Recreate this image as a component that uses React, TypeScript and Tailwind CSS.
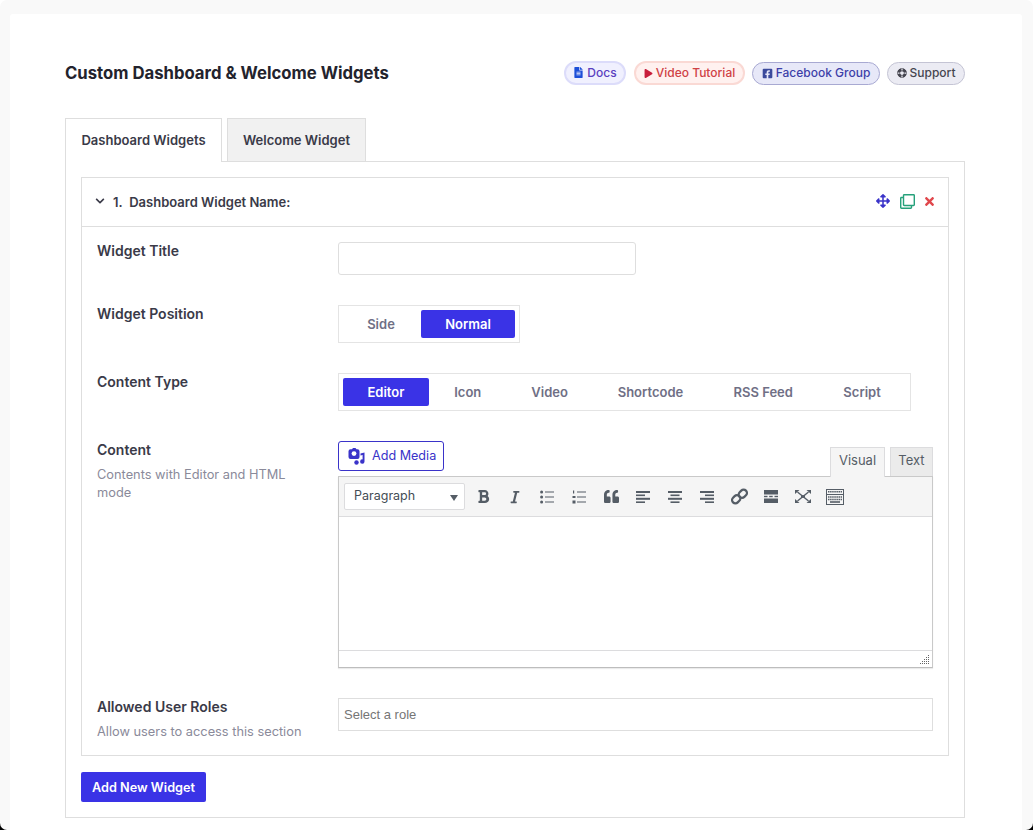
import { FaFileAlt, FaPlay, FaFacebookSquare, FaLifeRing, FaArrowsAlt, FaRegClone, FaTimes, FaChevronDown, FaBold, FaItalic, FaQuoteLeft } from 'react-icons/fa'

const FONT = "font-['Inter','Noto_Sans',sans-serif]"
const GREY = '#555d66'

function Label({ title, hint }: { title: string; hint?: string }) {
  return (
    <div className="w-[241px] shrink-0">
      <div className="text-[14px] leading-[18px] font-semibold text-[#3a3a48]">{title}</div>
      {hint && <div className="mt-[7px] text-[12.8px] leading-[18px] text-[#8a8a9a] w-[220px]">{hint}</div>}
    </div>
  )
}

function ListIcon({ numbered }: { numbered?: boolean }) {
  return (
    <svg width="14" height="14" viewBox="0 0 14 14" fill={GREY}>
      <rect x="5" y="1.5" width="9" height="1" />
      <rect x="5" y="6.5" width="9" height="1" />
      <rect x="5" y="11.5" width="9" height="1" />
      {numbered ? (
        <>
          <rect x="1" y="0.5" width="1.2" height="3" />
          <rect x="0.5" y="6" width="3" height="2" />
          <rect x="0.5" y="10.5" width="3" height="3" />
        </>
      ) : (
        <>
          <circle cx="1.6" cy="2" r="1.5" />
          <circle cx="1.6" cy="7" r="1.5" />
          <circle cx="1.6" cy="12" r="1.5" />
        </>
      )}
    </svg>
  )
}

function AlignIcon({ side }: { side: 'left' | 'center' | 'right' }) {
  const short = side === 'left' ? 0 : side === 'center' ? 2.5 : 5
  return (
    <svg width="14" height="14" viewBox="0 0 14 14" fill={GREY}>
      <rect x="0" y="1" width="14" height="2" />
      <rect x={short} y="4.5" width="9" height="1.6" />
      <rect x="0" y="7.8" width="14" height="2" />
      <rect x={short} y="11.4" width="9" height="1.6" />
    </svg>
  )
}

function LinkIcon() {
  return (
    <svg width="17" height="17" viewBox="0 0 18 18" fill="none" stroke={GREY} strokeWidth="2.4">
      <rect x="9" y="1.4" width="7" height="9.4" rx="3.5" transform="rotate(45 12.5 6.1)" />
      <rect x="2" y="7.2" width="7" height="9.4" rx="3.5" transform="rotate(45 5.5 11.9)" />
    </svg>
  )
}

function MoreIcon() {
  return (
    <svg width="14" height="13" viewBox="0 0 14 13" fill={GREY}>
      <rect x="0" y="0" width="14" height="4.5" />
      <rect x="0" y="5.8" width="3.5" height="1.4" />
      <rect x="5.2" y="5.8" width="3.5" height="1.4" />
      <rect x="10.5" y="5.8" width="3.5" height="1.4" />
      <rect x="0" y="8.5" width="14" height="4.5" />
    </svg>
  )
}

function FullscreenIcon() {
  return (
    <svg width="16" height="13" viewBox="0 0 16 13" fill={GREY}>
      <path d="M2.5 2 L13.5 11 M13.5 2 L2.5 11" stroke={GREY} strokeWidth="1.4" />
      <rect x="6" y="5.2" width="4" height="2.6" />
      <path d="M0 0h4.5L0 4zM16 0h-4.5L16 4zM0 13h4.5L0 9zM16 13h-4.5L16 9z" />
    </svg>
  )
}

function KitchenSinkIcon() {
  return (
    <svg width="18" height="16" viewBox="0 0 18 16" fill="none" stroke={GREY}>
      <rect x="0.5" y="0.5" width="17" height="15" />
      <path d="M2 2.7h14" strokeWidth="1.6" strokeDasharray="1.5 0.6" />
      <path d="M0.5 5.5h17" />
      <path d="M2 8h14M2 10.5h14" strokeWidth="1.6" strokeDasharray="1.5 0.6" />
      <path d="M4 13h10" strokeWidth="1.6" />
    </svg>
  )
}

function MediaIcon() {
  return (
    <svg className="shrink-0" width="17" height="17" viewBox="0 0 17 17" fill="#3a33c9">
      <path d="M0.5 3.2 A2 2 0 0 1 2.5 1.2 H4 L5 0 H7.5 L8.5 1.2 H9.5 A2 2 0 0 1 11.5 3.2 V9 A2 2 0 0 1 9.5 11 H2.5 A2 2 0 0 1 0.5 9 Z" />
      <circle cx="6" cy="5.6" r="2.4" fill="#fff" />
      <path d="M12.5 5.5 L16.5 4.5 V13.5 A2.2 2.2 0 1 1 14.6 11.4 V7 L12.5 7.5 Z" />
      <circle cx="8.5" cy="14.5" r="2.2" />
    </svg>
  )
}

export default function App() {
  const types = [
    { label: 'Editor', w: 'w-[86px]', active: true },
    { label: 'Icon', w: 'w-[78px]' },
    { label: 'Video', w: 'w-[86px]' },
    { label: 'Shortcode', w: 'w-[116px]' },
    { label: 'RSS Feed', w: 'w-[110px]' },
    { label: 'Script', w: 'w-[88px]' },
  ]
  const tools = [
    <FaBold size={15} />,
    <FaItalic size={14} />,
    <ListIcon />,
    <ListIcon numbered />,
    <FaQuoteLeft size={15} />,
    <AlignIcon side="left" />,
    <AlignIcon side="center" />,
    <AlignIcon side="right" />,
    <LinkIcon />,
    <MoreIcon />,
    <FullscreenIcon />,
    <KitchenSinkIcon />,
  ]

  return (
    <div className={`h-[830px] overflow-hidden bg-[linear-gradient(#fff_50%,#000_50%)] ${FONT}`}>
      <div className="h-full rounded-[7px] bg-[#f9f9f9] px-[10px] pt-[14px] overflow-hidden">
        <div className="h-[830px] w-[1012px] bg-white rounded-[3px] pl-[55px] pr-[57px] pt-[45px]">
          <div className="flex items-center justify-between h-[28px]">
            <h1 className="mt-[2px] text-[16.7px] font-bold text-[#23232d]">Custom Dashboard &amp; Welcome Widgets</h1>
            <div className="flex gap-[7px] text-[12px] font-medium whitespace-nowrap">
              <span className="flex items-center justify-center gap-[3px] w-[62px] h-[24px] mr-[1px] rounded-full border-2 border-[#dcdcfa] bg-[#f0f0fe] text-[#5a3fc0]">
                <FaFileAlt size={11} className="text-[#1d4fd8] -mt-[2px]" />Docs
              </span>
              <span className="flex items-center justify-center gap-[3px] w-[111px] h-[24px] rounded-full border-2 border-[#fad9d4] bg-[#fff1ef] text-[#cf4145]">
                <FaPlay size={9} className="text-[#c81e3c]" />Video Tutorial
              </span>
              <span className="flex items-center justify-center gap-[3px] w-[128px] h-[23px] mt-[0.5px] rounded-full border border-[#a8a9d2] bg-[#e7e8f8] text-[#3d3fa8]">
                <FaFacebookSquare size={11} className="text-[#3b4a9c]" />Facebook Group
              </span>
              <span className="flex items-center justify-center gap-[3px] w-[78px] h-[23px] mt-[0.5px] rounded-full border border-[#c4c4d4] bg-[#ebebf3] text-[#45454f]">
                <FaLifeRing size={10} className="text-[#45454f] rotate-45" />Support
              </span>
            </div>
          </div>

          <div className="mt-[31px] flex gap-[5px] text-[13px] font-semibold text-[#3a3a48]">
            <div className="relative z-10 w-[157px] h-[44px] -mb-px flex items-center justify-center bg-white border border-b-0 border-[#dedede]">
              Dashboard Widgets
            </div>
            <div className="w-[139px] h-[43px] pt-[2px] flex items-center justify-center bg-[#f1f1f1] border border-b-0 border-[#dedede]">
              Welcome Widget
            </div>
          </div>

          <div className="h-[657px] w-[900px] border border-[#dedede] px-[15px] pt-[15px]">
            <div className="h-[579px] border border-[#dedede]">
              <div className="h-[49px] flex items-center justify-between border-b border-[#dedede] pl-[13px] pr-[12px]">
                <div className="flex items-center gap-[8px] text-[13px] font-semibold text-[#3a3a48]">
                  <FaChevronDown size={10} className="-mt-[3px]" />
                  <span className="mt-[1px]">1.&nbsp; Dashboard Widget Name:</span>
                </div>
                <div className="flex items-center gap-[8px] -mt-[2px]">
                  <FaArrowsAlt size={14} className="text-[#3a33c9]" />
                  <FaRegClone size={15} className="text-[#26a17b] ml-[2px]" />
                  <FaTimes size={13} className="text-[#e0474c]" />
                </div>
              </div>

              <div className="px-[15px]">
                <div className="flex pt-[15px] h-[78px]">
                  <Label title="Widget Title" />
                  <div className="w-[298px] h-[33px] border border-[#dedede] rounded-[3px] bg-white" />
                </div>

                <div className="flex h-[68px]">
                  <Label title="Widget Position" />
                  <div className="flex items-center h-[38px] w-[182px] border border-[#e4e4e4] p-[4px] text-[13px] font-semibold">
                    <div className="w-[76px] pt-[1px] text-center text-[#6f6f85]">Side</div>
                    <div className="ml-[2px] w-[94px] h-[28px] pt-[1px] flex items-center justify-center bg-[#3a33e6] rounded-[2px] text-white">Normal</div>
                  </div>
                </div>

                <div className="flex h-[68px]">
                  <Label title="Content Type" />
                  <div className="flex items-center h-[38px] w-[573px] border border-[#e4e4e4] p-[4px] text-[13px] font-semibold">
                    {types.map(t => (
                      <div
                        key={t.label}
                        className={`${t.w} h-[28px] pt-[1px] flex items-center justify-center rounded-[2px] ${t.active ? 'bg-[#3a33e6] text-white' : 'text-[#6f6f85]'}`}
                      >
                        {t.label}
                      </div>
                    ))}
                  </div>
                </div>

                <div className="flex h-[257px]">
                  <Label title="Content" hint="Contents with Editor and HTML mode" />
                  <div className="w-[595px]">
                    <div className="flex items-end justify-between h-[35px]">
                      <div className="flex items-center h-[30px] w-[106px] mb-[5px] px-[9px] border border-[#3a33c9] rounded-[3px] text-[12.6px] text-[#3a33c9] bg-white whitespace-nowrap">
                        <MediaIcon />
                        <span className="ml-[7px] mt-[1px]">Add Media</span>
                      </div>
                      <div className="flex gap-[5px] text-[13px] text-[#555d66]">
                        <div className="relative z-10 -mb-px w-[55px] h-[30px] pb-[3px] flex items-center justify-center bg-[#f5f5f5] border border-b-0 border-[#dcdcde]">Visual</div>
                        <div className="w-[43px] h-[29px] pb-[3px] flex items-center justify-center bg-[#ebebeb] border border-b-0 border-[#dcdcde]">Text</div>
                      </div>
                    </div>
                    <div className="border border-[#c9c9c9] border-b-[#bdbdbd] shadow-[0_1px_1px_rgba(0,0,0,0.08)]">
                      <div className="h-[40px] bg-[#f5f5f5] border-b border-[#dcdcde] flex items-center pl-[5px]">
                        <div className="relative w-[121px] h-[27px] mr-[2px] bg-white border border-[#dcdcde] rounded-[2px] flex items-center pl-[9px] text-[12.5px] text-[#444c55]">
                          Paragraph
                          <div className="absolute right-[6px] top-[11px] w-0 h-0 border-x-[4px] border-x-transparent border-t-[6px] border-t-[#555d66]" />
                        </div>
                        {tools.map((icon, i) => (
                          <div key={i} className="w-[32px] flex items-center justify-center text-[#555d66]">{icon}</div>
                        ))}
                      </div>
                      <div className="h-[133px] bg-white" />
                      <div className="relative h-[17px] bg-white border-t border-[#dcdcde]">
                        <svg className="absolute right-[2px] bottom-[2px]" width="10" height="10" viewBox="0 0 10 10" fill="#666">
                          <rect x="8" y="0" width="1" height="1" /><rect x="6" y="2" width="1" height="1" /><rect x="8" y="2" width="1" height="1" />
                          <rect x="4" y="4" width="1" height="1" /><rect x="6" y="4" width="1" height="1" /><rect x="8" y="4" width="1" height="1" />
                          <rect x="2" y="6" width="1" height="1" /><rect x="4" y="6" width="1" height="1" /><rect x="6" y="6" width="1" height="1" /><rect x="8" y="6" width="1" height="1" />
                          <rect x="0" y="8" width="1" height="1" /><rect x="2" y="8" width="1" height="1" /><rect x="4" y="8" width="1" height="1" /><rect x="6" y="8" width="1" height="1" /><rect x="8" y="8" width="1" height="1" />
                        </svg>
                      </div>
                    </div>
                  </div>
                </div>

                <div className="flex">
                  <Label title="Allowed User Roles" hint="Allow users to access this section" />
                  <div className="w-[595px] h-[33px] border border-[#dedede] flex items-center pl-[5px] text-[13px] text-[#757575] font-['Liberation_Sans',sans-serif]">
                    Select a role
                  </div>
                </div>
              </div>
            </div>

            <div className="mt-[16px] w-[125px] h-[30px] pt-[1px] flex items-center justify-center rounded-[2px] bg-[#3a33e6] text-white text-[12.7px] font-semibold">
              Add New Widget
            </div>
          </div>
        </div>
      </div>
    </div>
  )
}
